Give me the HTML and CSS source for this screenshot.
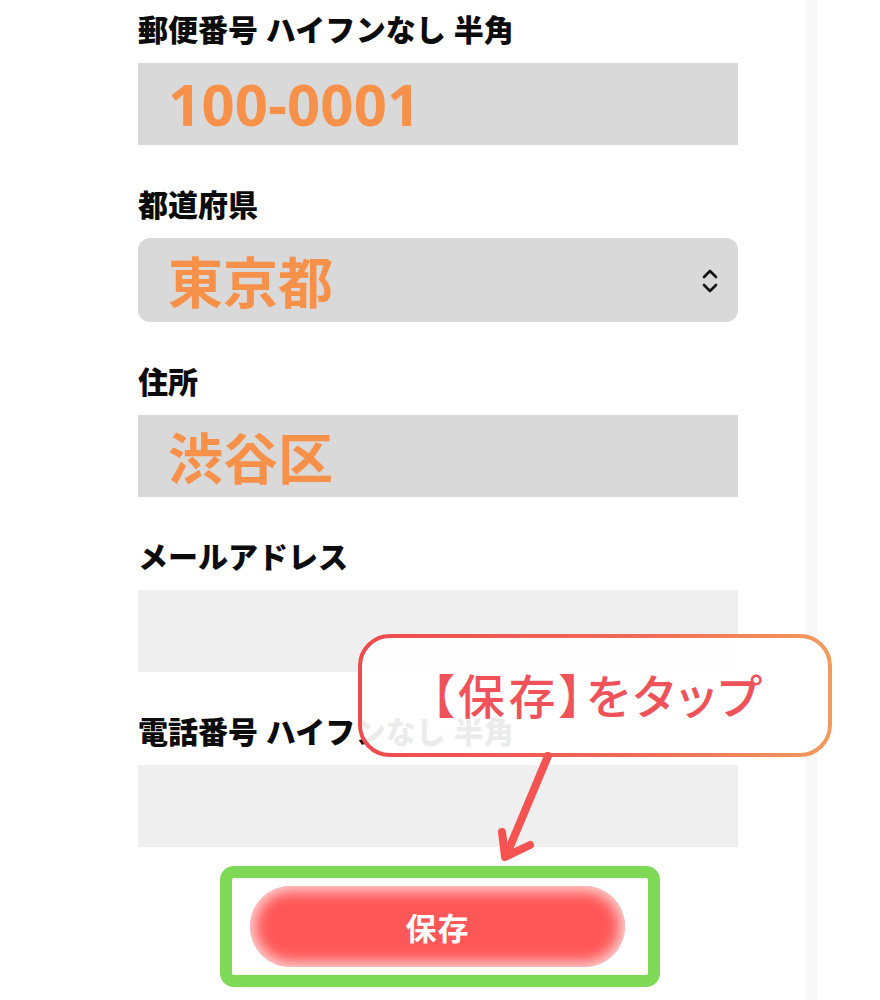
FILE: index.html
```html
<!DOCTYPE html>
<html lang="ja">
<head>
<meta charset="utf-8">
<link rel="stylesheet" href="styles.css">
</head>
<body>
<div class="page">
  <main class="form">
    <div class="field">
      <div class="label">郵便番号 ハイフンなし 半角</div>
      <div class="input filled"><span class="num">100-0001</span></div>
    </div>
    <div class="field">
      <div class="label">都道府県</div>
      <div class="input filled select">
        <span>東京都</span>
        <svg class="chev" width="16" height="26" viewBox="0 0 16 26"><path d="M2 9 L8 3 L14 9 M2 17 L8 23 L14 17" fill="none" stroke="#111" stroke-width="2.6" stroke-linecap="round" stroke-linejoin="round"/></svg>
      </div>
    </div>
    <div class="field">
      <div class="label">住所</div>
      <div class="input filled"><span>渋谷区</span></div>
    </div>
    <div class="field">
      <div class="label">メールアドレス</div>
      <div class="input empty"></div>
    </div>
    <div class="field">
      <div class="label">電話番号 ハイフンなし 半角</div>
      <div class="input empty"></div>
    </div>
    <div class="btn-wrap">
      <div class="highlight">
        <div class="save">保存</div>
      </div>
    </div>

    <div class="callout">
      <svg class="bubble" width="474" height="123" viewBox="0 0 474 123">
        <defs>
          <linearGradient id="g" x1="0" y1="0" x2="1" y2="0">
            <stop offset="0" stop-color="#ee4a4f"/>
            <stop offset="0.6" stop-color="#f06a56"/>
            <stop offset="1" stop-color="#f29b5e"/>
          </linearGradient>
        </defs>
        <rect x="2" y="2" width="470" height="119" rx="30" ry="30" fill="rgba(255,255,255,0.92)" stroke="url(#g)" stroke-width="4"/>
      </svg>
      <div class="callout-text">【保存】をタップ</div>
    </div>
    <svg class="arrow" width="80" height="120" viewBox="0 0 80 120">
      <path d="M60 4 L18 104 M14 80 L17 105 L42 93" fill="none" stroke="#f55252" stroke-width="8" stroke-linecap="round" stroke-linejoin="round"/>
    </svg>
  </main>
  <div class="strip"></div>
</div>
</body>
</html>
```

FILE: styles.css
```css
* { box-sizing: border-box; }
html, body { margin: 0; padding: 0; background: #fff; }
body {
  font-family: "Noto Sans CJK JP", "Noto Sans", sans-serif;
  color: #111;
}
.page {
  display: flex;
  width: 880px;
  height: 1000px;
  overflow: hidden;
}
.form {
  position: relative;
  width: 806px;
  padding: 10px 0 0 138px;
}
.strip {
  width: 11px;
  background: #f8f8f8;
}
.field {
  width: 600px;
  margin-bottom: 40px;
}
.field:nth-child(5) { margin-bottom: 19px; }
.label {
  font-size: 30px;
  font-weight: 900;
  line-height: 36px;
  height: 40px;
  margin-bottom: 13px;
  white-space: nowrap;
  word-spacing: 1px;
  color: #0c0c0c;
}
.input {
  height: 82px;
  display: flex;
  align-items: center;
  padding-left: 30px;
}
.filled {
  background: #d9d9d9;
  color: #f79149;
  font-size: 55px;
  font-weight: 700;
  line-height: 1;
}
.filled span { display: block; margin-top: -2px; }
.filled .num {
  font-family: "Noto Sans", "Noto Sans CJK JP", sans-serif;
  font-size: 58px;
  letter-spacing: 0.2px;
  margin-top: 0;
}
.empty { background: #efefef; }
.select {
  border-radius: 12px;
  justify-content: space-between;
  padding-right: 20px;
  height: 84px;
}
.chev { margin-top: 2px; }
.btn-wrap {
  width: 600px;
  display: flex;
  padding-left: 82px;
}
.highlight {
  width: 440px;
  height: 121px;
  border: 12px solid #7ed957;
  border-radius: 14px;
  padding: 8px 23px 8px 18px;
}
.save {
  height: 81px;
  border-radius: 41px;
  background: #ff5757;
  box-shadow: inset 0 0 14px 5px rgba(255,255,255,0.75);
  color: #fff;
  font-size: 31px;
  font-weight: 700;
  display: flex;
  align-items: center;
  justify-content: center;
  letter-spacing: 1px;
}
.callout {
  position: absolute;
  left: 358px;
  top: 634px;
  width: 474px;
  height: 123px;
}
.bubble { position: absolute; left: 0; top: 0; }
.callout-text {
  position: absolute;
  left: 0;
  top: 0;
  width: 474px;
  height: 123px;
  display: flex;
  align-items: center;
  justify-content: center;
  font-size: 47px;
  font-weight: 500;
  color: #f0525a;
  font-feature-settings: "palt";
  letter-spacing: 3.6px;
  padding: 0 0 4px 6px;
}
.arrow {
  position: absolute;
  left: 488px;
  top: 752px;
}
```
